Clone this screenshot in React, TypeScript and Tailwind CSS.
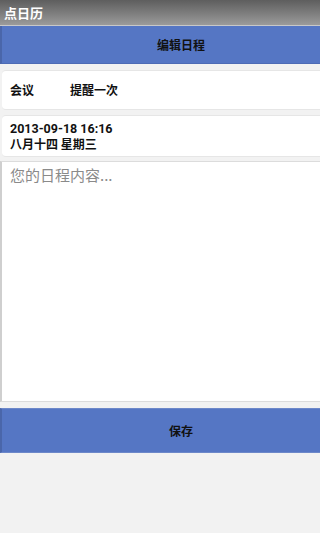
import React, { useState } from 'react';

export default function App() {
  const [content, setContent] = useState('');

  return (
    <div
      className="w-[320px] h-[533px] bg-[#f2f2f2] flex flex-col overflow-hidden"
      style={{ fontFamily: '"Noto Sans CJK SC", "DejaVu Sans", sans-serif' }}
    >
      {/* Title bar */}
      <div className="h-[26px] shrink-0 bg-gradient-to-b from-[#5e5e5e] to-[#9b9b9b] flex items-center px-[4px] border-b border-[#c8c8c8]">
        <span className="text-white text-[13px] font-bold leading-none">点日历</span>
      </div>

      {/* Header */}
      <div className="h-[38px] shrink-0 bg-[#5576c4] border-l-[2px] border-[#4a66aa] border-b border-b-[#4d6bb5] flex items-center justify-center pl-[40px]">
        <span className="text-[12px] font-bold text-[#111]">编辑日程</span>
      </div>

      {/* Type / reminder */}
      <div className="mt-[6px] ml-[2px] h-[40px] shrink-0 bg-white rounded-l-[4px] border-y border-[#e6e6e6] flex items-center px-[8px] gap-[36px] text-[12px] font-bold text-[#111]">
        <span>会议</span>
        <span>提醒一次</span>
      </div>

      {/* Date */}
      <div className="mt-[5px] ml-[2px] h-[42px] shrink-0 bg-white rounded-l-[4px] border-y border-[#e6e6e6] flex flex-col justify-center px-[8px] text-[12px] font-bold text-[#111] leading-[15px]">
        <span style={{ fontFamily: 'Roboto, "Noto Sans CJK SC", sans-serif' }} className="text-[12.5px] leading-[15px]">2013-09-18 16:16</span>
        <span className="leading-[15px]">八月十四 星期三</span>
      </div>

      {/* Content */}
      <textarea
        value={content}
        onChange={(e) => setContent(e.target.value)}
        placeholder="您的日程内容..."
        className="mt-[4px] h-[241px] shrink-0 resize-none bg-white border-l-[2px] border-y border-[#dcdcdc] border-l-[#cfcfcf] px-[8px] py-[3px] text-[15px] leading-[20px] text-[#333] placeholder-[#8a8a8a] outline-none"
      />

      {/* Save */}
      <button className="mt-[6px] h-[45px] shrink-0 bg-[#5576c4] border-l-[2px] border-[#4a66aa] border-y border-y-[#6d88c9] flex items-center justify-center pl-[40px] text-[12px] font-bold text-[#111]">
        保存
      </button>
    </div>
  );
}
